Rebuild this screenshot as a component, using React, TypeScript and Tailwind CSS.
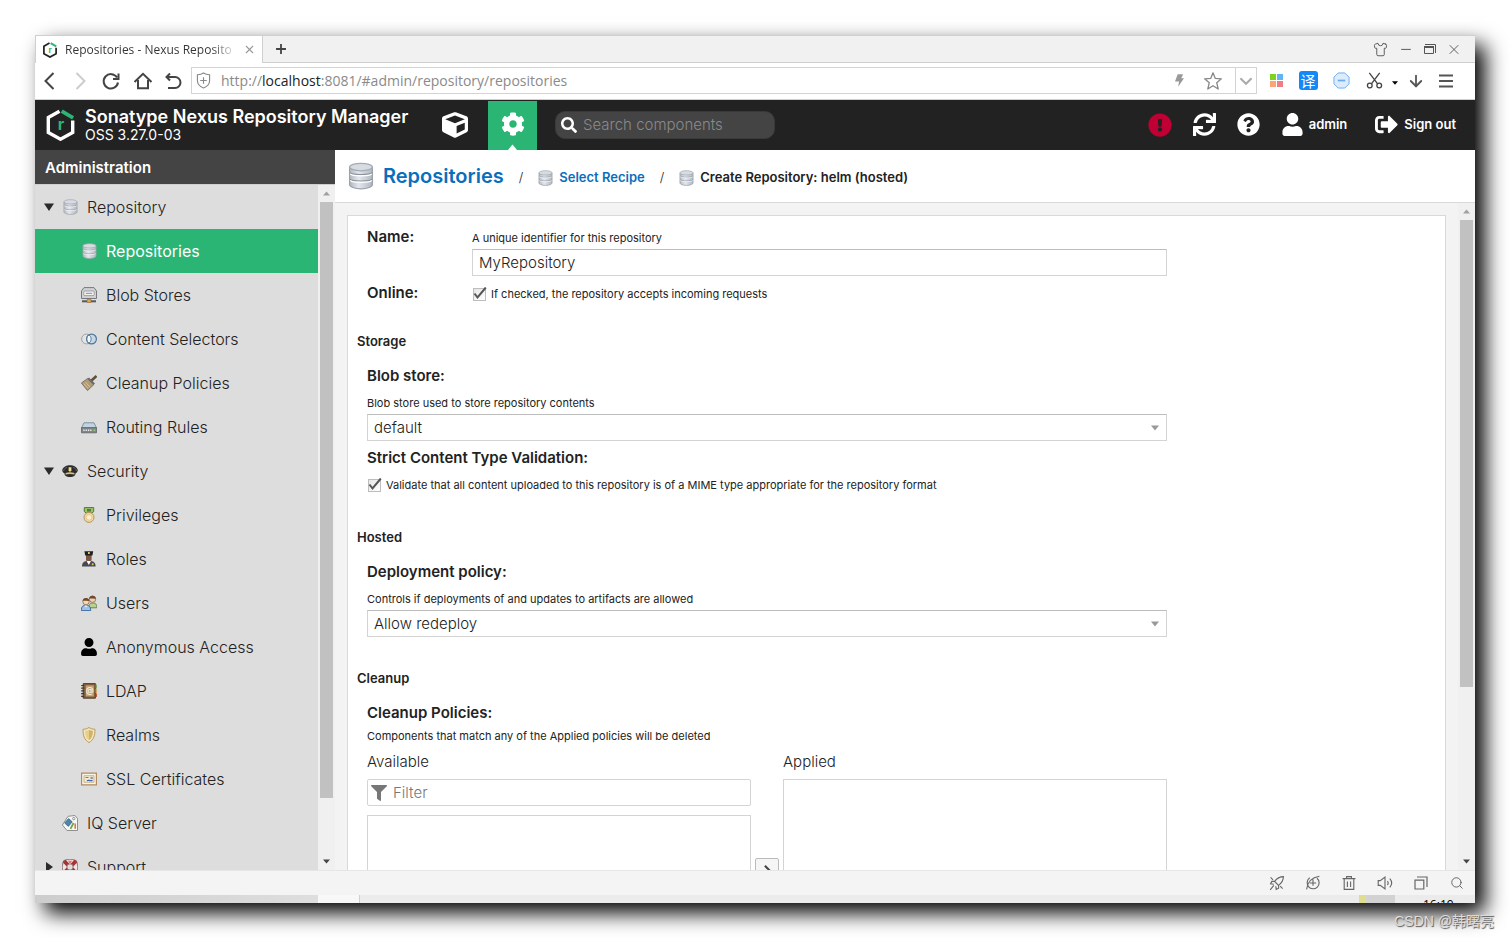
import { useState, type ReactNode } from 'react'
import {
  FaCog, FaCube, FaExclamationCircle, FaFilter, FaQuestionCircle, FaSearch, FaSignOutAlt, FaSync, FaUser,
} from 'react-icons/fa'
import { ArrowDown, Search, Shirt, X } from 'lucide-react'

/* ---------- icons ---------- */

const NexusLogo = ({ className, ring }: { className: string; ring: string }) => (
  <svg viewBox="0 0 28 32" className={className} fill="none">
    <path d="M13 2.2 1.8 8.6v14.8L14 30.2l12.2-6.8V11.5" stroke={ring} strokeWidth="3.4" />
    <path d="M15.2 2.2 26.6 8.8" stroke="#2bb574" strokeWidth="3.8" />
    <text x="14.4" y="21" textAnchor="middle" fontSize="16" fontWeight="700" fontFamily="Inter, sans-serif" fill="#2bb574">r</text>
  </svg>
)

const Database = ({ className = 'h-4 w-4' }: { className?: string }) => (
  <svg viewBox="0 0 16 17" className={className}>
    <defs>
      <linearGradient id="disk" x1="0" x2="1">
        <stop offset="0" stopColor="#b3b8c0" />
        <stop offset=".4" stopColor="#e3e8ef" />
        <stop offset="1" stopColor="#b0b6c0" />
      </linearGradient>
    </defs>
    <path d="M1 3.2v10.6c0 1.3 3 2.6 7 2.6s7-1.3 7-2.6V3.2Z" fill="url(#disk)" stroke="#9da2aa" strokeWidth=".8" />
    <path d="M1.2 6.4c1 1.6 12.6 1.6 13.6 0M1.2 10.4c1 1.6 12.6 1.6 13.6 0" fill="none" stroke="#8d939c" strokeWidth=".7" />
    <path d="M1.4 7.2c1 1.6 12.2 1.6 13.2 0M1.4 11.2c1 1.6 12.2 1.6 13.2 0" fill="none" stroke="#fff" strokeWidth=".7" />
    <ellipse cx="8" cy="3" rx="7" ry="2.3" fill="#d7dce2" stroke="#a6abb3" strokeWidth=".8" />
  </svg>
)

const Pic = ({ children }: { children: ReactNode }) => (
  <svg viewBox="0 0 16 16" className="h-4 w-4" fill="none">{children}</svg>
)

const BlobStores = () => (
  <Pic>
    <path d="M3 .6h10L15.500 4v7.500H.5V4Z" fill="#d0d1d3" stroke="#77797d" />
    <rect x="2.800" y="4" width="10.400" height="4.600" rx="1" fill="#f3f3f3" stroke="#8f9194" strokeWidth=".8" />
    <path d="M4.800 6.300h6.400" stroke="#8b8d90" />
    <path d="M1 14.300h14" stroke="#55575a" strokeWidth="2" />
    <path d="M6 12.400h4v3.200H6Z" fill="#e0a757" stroke="#8d6a35" strokeWidth=".6" />
  </Pic>
)

const ContentSelectors = () => (
  <Pic>
    <circle cx="5.500" cy="8" r="4.900" fill="#e4e4e4" stroke="#9fa1a3" />
    <circle cx="10.500" cy="8" r="4.900" fill="#c6d9e8" stroke="#4f7599" strokeWidth="1.200" />
    <path d="M8 3.900a4.900 4.900 0 0 1 0 8.200 4.900 4.900 0 0 1 0-8.200Z" fill="#f5f8fb" stroke="#4f7599" strokeWidth=".9" />
  </Pic>
)

const Broom = () => (
  <Pic>
    <path d="m10 6 5.500-5" stroke="#5f4e3d" strokeWidth="2.600" />
    <path d="M6.800 3.400 13 9.400 6.500 15.600.4 8Z" fill="#b39a77" stroke="#75624a" strokeWidth=".8" />
    <path d="m2.600 8.600 4.600 5M4.600 7.200l4.400 5" stroke="#dac7a5" strokeWidth=".9" />
    <path d="m7.200 3.200 6 6" stroke="#6b6c6e" strokeWidth="2.200" />
  </Pic>
)

const Router = () => (
  <Pic>
    <path d="M3 3.800h10L15.500 9H.5Z" fill="#c0d5e0" stroke="#74899a" strokeWidth=".9" />
    <path d="M.5 8.600h15v5.200H.5Z" fill="#808589" stroke="#606467" strokeWidth=".8" />
    <path d="M2.300 11.300h9" stroke="#f2f2f2" strokeWidth="1.600" strokeDasharray="1.300 1" />
    <path d="M12.600 11.300h1.600" stroke="#8fd46a" strokeWidth="1.600" />
  </Pic>
)

const PoliceCap = () => (
  <Pic>
    <path d="M.2 7C1.300 3.600 5 2.200 8 2.200S14.700 3.600 15.800 7c0 2-1.300 3-2.400 3.500.3 2.200-2 3.600-5.400 3.600s-5.700-1.400-5.400-3.600C1.500 10 .2 9 .2 7Z" fill="#2b2b2d" />
    <path d="M3.600 10c2.600-1 6.200-1 8.800 0l.2 1.500c-3-.8-6.200-.8-9.200 0Z" fill="#d8c07b" />
    <path d="M6.600 4.200h2.800v3.300L8 9 6.600 7.500Z" fill="#f2dc8c" />
    <path d="M1.500 8c.6-2 1.900-3.200 3.500-3.900M14.500 8c-.6-2-1.900-3.200-3.500-3.900" stroke="#77787c" strokeWidth=".8" />
  </Pic>
)

const Medal = () => (
  <Pic>
    <path d="M3.300.600h9.400v4L10.700 6H5.300l-2-1.400Z" fill="#9bc46e" stroke="#4f7a35" />
    <path d="M6 2h4v2.600H6Z" fill="#4f8232" />
    <circle cx="8" cy="10.400" r="5" fill="#efd9a3" stroke="#bd9556" />
    <circle cx="8" cy="10.400" r="2.800" fill="#faf0d2" stroke="#dcc286" strokeWidth=".8" />
  </Pic>
)

const Officer = () => (
  <Pic>
    <path d="M5 4h5.600v4.400c0 1.400-1.200 2.400-2.800 2.400S5 9.800 5 8.400Z" fill="#7b5644" />
    <path d="M3.400.300h8.800l-.8 4.200H4.200Z" fill="#1f2023" />
    <path d="M7 1.100h1.800v1.800H7Z" fill="#e8c95c" />
    <path d="M1 15.600c0-3.600 1.500-4.900 4.600-5.500h4.400c3.100.6 4.600 1.900 4.600 5.500Z" fill="#47494e" />
    <path d="m5.600 10.100 2.200 4 2.200-4Z" fill="#fff" />
    <path d="M10.800 12.300h1.700v1.900h-1.700Z" fill="#e8c95c" />
  </Pic>
)

const People = () => (
  <Pic>
    <path d="M8 12.800c0-3.800 1-4.800 3.800-4.800s4 1 4 4.800Z" fill="#b7d193" stroke="#5f7d40" strokeWidth=".9" />
    <circle cx="11.500" cy="4.200" r="3.200" fill="#f3cfae" stroke="#8b6547" strokeWidth=".8" />
    <path d="M8.200 3.800C8.200-.200 14.800-.200 14.800 3.800c-2.200.2-4.400-.5-6.600 0Z" fill="#6d4a30" />
    <path d="M.4 15.600c0-4.200 1.400-5.300 4.500-5.300s4.800 1.100 4.800 5.300Z" fill="#9cc2e6" stroke="#32609a" strokeWidth=".9" />
    <path d="m3.400 10.600 1.600 2 1.600-2Z" fill="#fff" />
    <circle cx="5" cy="6.600" r="3.200" fill="#f7d7b8" stroke="#8b6547" strokeWidth=".8" />
    <path d="M1.700 6c0-4 6.600-4 6.600 0-2.200.2-4.400-.5-6.600 0Z" fill="#6d4a30" />
  </Pic>
)

const AddressBook = () => (
  <Pic>
    <path d="M2.200.6h12.200v14.600H2.200Z" fill="#84623f" stroke="#573d23" />
    <path d="M4.800 2.400h8v11H4.800Z" fill="#c3a67c" />
    <path d="M15.200 1.500v4" stroke="#72a558" strokeWidth="1.400" />
    <path d="M15.200 6v4" stroke="#d6a04a" strokeWidth="1.400" />
    <path d="M15.200 10.500v3.500" stroke="#b04a32" strokeWidth="1.400" />
    <path d="M.2 2.500h3M.2 5.200h3M.2 7.900h3M.2 10.600h3M.2 13.300h3" stroke="#403729" strokeWidth="1.200" />
    <text x="8.800" y="10.400" textAnchor="middle" fontSize="8" fontWeight="600" fontFamily="Inter, sans-serif" fill="#fff4dc">@</text>
  </Pic>
)

const Shield = () => (
  <Pic>
    <path d="M8 .5c1.700 1.200 3.600 1.700 5.900 1.700.4 6.200-1.400 10.600-5.900 13.400C3.500 12.800 1.700 8.400 2.100 2.200 4.400 2.200 6.300 1.700 8 .5Z" fill="#f5e6bd" stroke="#b89a60" />
    <path d="M8 2.800c1.200.8 2.400 1.100 3.900 1.200 0 4.200-1.200 7.200-3.900 9.300Z" fill="#cdb468" />
    <path d="M8 2.800c-1.200.8-2.400 1.100-3.900 1.200 0 4.200 1.200 7.200 3.900 9.300Z" fill="#e6d08b" />
  </Pic>
)

const Certificate = () => (
  <Pic>
    <path d="M.6 2.200h14.800v11.600H.6Z" fill="#fbf5e8" stroke="#b08c5e" strokeWidth="1.200" />
    <path d="M3 4.700h10v6.600H3Z" fill="#f3ead6" stroke="#bda67d" strokeWidth=".8" />
    <path d="M4.500 6.500h3" stroke="#8b7a58" />
    <path d="M9.500 5.900h2.300v2.100H9.500Z" fill="#8a959f" />
    <path d="M6 9.900c1.500-1.500 2.500.5 5.500-.5" stroke="#3f66a8" strokeWidth="1.300" />
  </Pic>
)

const IqServer = () => (
  <Pic>
    <path d="M6 1.300 13 .5l2.500 3v12H5L.4 10Z" fill="#f7f7f7" stroke="#8f8f8f" />
    <path d="m6.600 3.600 3.600 3.200-3.800 4.600L2.600 8Z" fill="#4d87a8" stroke="#2f5c75" strokeWidth=".7" />
    <path d="m8.500 13.800 3-5.800" stroke="#6fa146" strokeWidth="1.700" />
    <path d="M13.200 13.800V8.500" stroke="#cf7f42" strokeWidth="1.600" />
    <circle cx="11.800" cy="3.600" r="1.200" stroke="#8a8a8a" strokeWidth=".9" />
  </Pic>
)

const Lifebuoy = () => (
  <Pic>
    <rect x=".8" y=".8" width="14.400" height="14.400" rx="3.500" fill="#dadada" stroke="#7d6060" />
    <circle cx="8" cy="8" r="5.200" stroke="#efe6e6" strokeWidth="4" />
    <path d="M2.200 2.200 5.800 5.800M13.800 2.200l-3.600 3.600M2.200 13.800l3.600-3.600M13.800 13.800l-3.600-3.600" stroke="#a83232" strokeWidth="3.800" />
    <path d="M6 1.800h4L8.800 4H7.200Z" fill="#e07a72" />
    <circle cx="8" cy="8" r="3.200" fill="#ddd" stroke="#8c4b4b" strokeWidth=".8" />
  </Pic>
)

const Line = ({ d, className = 'h-5 w-5', width = 2 }: { d: string; className?: string; width?: number }) => (
  <svg viewBox="0 0 20 20" className={className} fill="none" stroke="currentColor" strokeWidth={width}>
    <path d={d} />
  </svg>
)

const Triangle = ({ d, className }: { d: string; className: string }) => (
  <svg viewBox="0 0 10 10" className={className} fill="currentColor">
    <path d={d} />
  </svg>
)

const UP = 'M0 8 5 2l5 6Z'
const DOWN = 'M0 2h10L5 8Z'
const RIGHT = 'M2 0l7 5-7 5Z'
const TREE_OPEN = 'M0 1.500h10L5 9Z'

/* ---------- browser chrome ---------- */

const IconButton = ({ label, className, children }: { label: string; className: string; children: ReactNode }) => (
  <button type="button" aria-label={label} className={`flex shrink-0 items-center justify-center ${className}`}>
    {children}
  </button>
)

const TabStrip = () => (
  <div className="flex h-7 shrink-0 border-t border-[#cfcfcf] bg-[#f1f1f1] font-['Open_Sans',sans-serif]">
    <div className="flex w-[228px] items-center border-r border-l border-[#cfcfcf] bg-white pl-[7px]">
      <NexusLogo className="h-4 w-[14px]" ring="#222" />
      <span className="ml-2 w-[172px] overflow-hidden bg-linear-to-r from-[#333] from-85% to-transparent bg-clip-text text-[12px] whitespace-nowrap text-transparent">
        Repositories - Nexus Reposito
      </span>
      <IconButton label="Close tab" className="ml-1 h-4 w-4 text-[#999]">
        <X size={13} strokeWidth={2} />
      </IconButton>
    </div>
    <div className="flex flex-1 items-center border-b border-[#cfcfcf]">
      <IconButton label="New tab" className="h-6 w-9 text-[#444]">
        <Line d="M10 4.500v11M4.500 10h11" className="h-[18px] w-[18px]" />
      </IconButton>
      <div className="mr-[13px] ml-auto flex items-center gap-2 text-[#555]">
        <IconButton label="Skin" className="h-4 w-5"><Shirt size={15} strokeWidth={1.500} /></IconButton>
        <IconButton label="Minimize" className="h-4 w-4"><Line d="M4 10.500h12" width={1.200} className="h-4 w-4" /></IconButton>
        <IconButton label="Restore" className="h-4 w-4">
          <svg viewBox="0 0 14 14" className="h-[14px] w-[14px]" fill="none" stroke="currentColor">
            <path d="M1.500 4.500h9v7h-9Z" />
            <path d="M1 5h10" strokeWidth="2" />
            <path d="M2 2.500h10.500v8.500" />
          </svg>
        </IconButton>
        <IconButton label="Close" className="h-4 w-4"><X size={17} strokeWidth={1.400} /></IconButton>
      </div>
    </div>
  </div>
)

const Toolbar = () => (
  <div className="flex h-[37px] shrink-0 items-center border-b border-[#cfcfcf] bg-white pr-[15px] pb-px text-[#444]">
    <IconButton label="Back" className="h-7 w-[30px]"><Line d="M13.500 2 5.500 10l8 8" /></IconButton>
    <IconButton label="Forward" className="h-7 w-[30px] text-[#ccc]"><Line d="M6.500 2l8 8-8 8" /></IconButton>
    <IconButton label="Reload" className="h-7 w-8"><Line d="M16 6.500A7.200 7.200 0 1 0 17 11.500M17.500 2.500v5.500H12" /></IconButton>
    <IconButton label="Home" className="h-7 w-8"><Line d="M1.500 11 10 2.800l8.500 8.200M5 9v8.200h10V9" /></IconButton>
    <IconButton label="Undo" className="h-7 w-7"><Line d="M7 2.500 3.500 6 7 9.500M3.500 6H12a5 5 0 0 1 0 11H5" /></IconButton>

    <div className="ml-1 flex h-[27px] min-w-0 flex-1 items-center border border-[#d4d4d4]">
      <svg viewBox="0 0 16 18" className="ml-1 h-[17px] w-[15px] shrink-0 text-[#888]" fill="none" stroke="currentColor" strokeWidth="1.200">
        <path d="M8 1c2 1.400 4.200 1.800 6.500 1.800V9c0 4-2.500 6.500-6.500 8-4-1.500-6.500-4-6.500-8V2.800C3.800 2.800 6 2.400 8 1Z" />
        <path d="M8 5.500v7M4.500 9h7" />
      </svg>
      <p className="ml-[10px] min-w-0 flex-1 truncate font-['Open_Sans',sans-serif] text-[14px] text-[#8a8a8a]">
        http://<span className="text-[#222]">localhost</span>:8081/#admin/repository/repositories
      </p>
      <IconButton label="Speed mode" className="h-6 w-6 text-[#999]">
        <svg viewBox="0 0 10 14" className="h-[13px] w-[9px]" fill="currentColor"><path d="M3 0h6L7 4.500h3L3.500 14l1-6H0Z" /></svg>
      </IconButton>
      <IconButton label="Bookmark" className="h-6 w-11 text-[#888]">
        <svg viewBox="0 0 20 20" className="h-5 w-5" fill="none" stroke="currentColor" strokeWidth="1.300" strokeLinejoin="round">
          <path d="M10 1.800l2.300 5.600 6.100.4-4.700 3.900 1.500 6.300L10 14.700 4.800 18l1.500-6.300L1.600 7.800l6.100-.4Z" />
        </svg>
      </IconButton>
      <IconButton label="History" className="h-full w-[21px] border-l border-[#d4d4d4] text-[#aaa]">
        <Line d="M3 6.500l7 7 7-7" className="h-4 w-4" width={2.400} />
      </IconButton>
    </div>

    <IconButton label="Apps" className="ml-[3px] h-7 w-8">
      <span className="grid grid-cols-2 gap-px">
        <i className="h-[6px] w-[6px] bg-[#7ed321]" />
        <i className="h-[6px] w-[6px] bg-[#62b5f5]" />
        <i className="h-[6px] w-[6px] bg-[#ffa274]" />
        <i className="h-[6px] w-[6px] bg-[#f07c86]" />
      </span>
    </IconButton>
    <IconButton label="Translate" className="h-7 w-8">
      <span className="flex h-[19px] w-[19px] items-center justify-center rounded-[3px] bg-[#1488f5] font-['Noto_Sans_CJK_SC',sans-serif] text-[15px] leading-none text-white">译</span>
    </IconButton>
    <IconButton label="Ad block" className="h-7 w-[34px]">
      <svg viewBox="0 0 18 18" className="h-[17px] w-[17px]" fill="#dcecfd" stroke="#6aaaf0">
        <path d="M5.500 1h7L17 5.500v7L12.500 17h-7L1 12.500v-7Z" />
        <path d="M5 9h8" strokeWidth="1.800" />
      </svg>
    </IconButton>
    <IconButton label="Screenshot" className="h-7 w-8">
      <svg viewBox="0 0 18 18" className="h-[17px] w-[17px]" fill="none" stroke="currentColor" strokeWidth="1.400">
        <path d="M3.500 1l8.800 11.500M14.500 1 5.700 12.500" />
        <circle cx="4" cy="14.300" r="2.500" />
        <circle cx="14" cy="14.300" r="2.500" />
      </svg>
    </IconButton>
    <IconButton label="Screenshot options" className="h-7 w-[10px] text-black"><Triangle d={DOWN} className="mt-1 h-[6px] w-[6px]" /></IconButton>
    <IconButton label="Downloads" className="h-7 w-8 text-[#555]"><ArrowDown size={18} strokeWidth={2.400} /></IconButton>
    <IconButton label="Menu" className="h-7 w-7 text-[#555]"><Line d="M3 4.500h14M3 10h14M3 15.500h14" /></IconButton>
  </div>
)

const StatusBar = () => (
  <div className="flex h-[25px] shrink-0 items-center justify-end gap-5 border-t border-[#e6e6e6] bg-[#f4f4f4] pr-[10px] text-[#666]">
    <IconButton label="Accelerate" className="h-4 w-4">
      <Line d="M18 2c-5 0-8 2-11 6l5 5c4-3 6-6 6-11ZM7 8H3.500L2 11l4 .5M12 13v3.500L9 18l-.5-4M6 13l-4.500 5.500M2 3l3 3M14 14l3 3" width={1.400} className="h-4 w-4" />
    </IconButton>
    <IconButton label="Compat mode" className="h-4 w-4">
      <Line d="M15 4a7.500 7.500 0 1 1-9-.5M2 18C3 9 8 3 18 1.500M10 5.500v8M6 10h8" width={1.400} className="h-4 w-4" />
    </IconButton>
    <IconButton label="Clear" className="h-4 w-4">
      <Line d="M2 4.500h16M7 4.500V2h6v2.500M4 4.500V18h12V4.500M8 8v7M12 8v7" width={1.400} className="h-4 w-4" />
    </IconButton>
    <IconButton label="Sound" className="h-4 w-4">
      <Line d="M1.500 7v6H4l6 4.500v-15L4 7ZM13 7.500c1.200 1.500 1.200 3.500 0 5M16 4.500c3 3.500 3 7.500 0 11" width={1.400} className="h-4 w-4" />
    </IconButton>
    <IconButton label="Windows" className="h-4 w-4">
      <Line d="M2.500 6.500h11v11h-11ZM5 2.500h12.500V15" width={1.500} className="h-4 w-4" />
    </IconButton>
    <IconButton label="Find" className="h-4 w-4"><Search size={14} strokeWidth={1.700} /></IconButton>
  </div>
)

// sliver of the desktop task bar below the browser
const TaskBar = () => (
  <div className="flex h-2 shrink-0 overflow-hidden bg-[#ebebeb]">
    <div className="w-[283px] bg-linear-to-r from-[#cdcdcd] to-[#dedede]" />
    <div className="w-[42px] border-r border-[#cfcfcf] bg-[#f8f8f8]" />
    <div className="ml-auto w-[7px] bg-[#e0de8e]" />
    <div className="w-[29px] bg-[#d2d2d2]" />
    <span className="w-20 pl-7 font-['Open_Sans',sans-serif] text-[12px] leading-5 text-black">16:19</span>
  </div>
)

const ScrollBar = ({ thumb }: { thumb: string }) => (
  <div className="flex w-[17px] shrink-0 flex-col items-center bg-[#f0f0f0]">
    <Triangle d={UP} className="my-[5px] h-[7px] w-[7px] shrink-0 text-[#a0a0a0]" />
    <div className={`w-[13px] bg-[#c1c1c1] ${thumb}`} />
    <Triangle d={DOWN} className="mt-auto mb-[5px] h-[7px] w-[7px] shrink-0 text-[#444]" />
  </div>
)

/* ---------- nexus ---------- */

const AppHeader = () => (
  <header className="flex h-[50px] shrink-0 items-center bg-[#222] pr-[19px] text-white">
    <NexusLogo className="ml-[11px] h-8 w-[29px]" ring="#fff" />
    <div className="ml-[10px] w-[344px]">
      <h1 className="text-[18px] leading-5 font-semibold whitespace-nowrap">Sonatype Nexus Repository Manager</h1>
      <p className="text-[14px] leading-4">OSS 3.27.0-03</p>
    </div>
    <button type="button" aria-label="Browse" className="flex h-full w-[59px] items-center pb-px pl-[13px]">
      <FaCube size={26} />
    </button>
    <button type="button" aria-label="Administration" className="relative mt-px flex h-[49px] w-[49px] shrink-0 items-center justify-center bg-[#2bb574] pb-[3px]">
      <FaCog size={24} />
      <Triangle d="M0 10 5 4l5 6Z" className="absolute bottom-0 left-5 h-[9px] w-[9px]" />
    </button>
    <label className="ml-[18px] flex h-7 w-[220px] items-center rounded-[10px] border border-[#3a3a3a] bg-[#444] pl-[5px]">
      <FaSearch size={16} />
      <input type="text" placeholder="Search components" aria-label="Search components" className="ml-[6px] w-44 bg-transparent text-[15px] font-light outline-none placeholder:text-[#8a8a8a]" />
    </label>
    <div className="ml-auto flex shrink-0 items-center gap-[21px] pb-px text-[13px] font-semibold">
      <button type="button" aria-label="System status" className="text-[#c00034]"><FaExclamationCircle size={24} /></button>
      <button type="button" aria-label="Refresh"><FaSync size={23} /></button>
      <button type="button" aria-label="Help"><FaQuestionCircle size={23} /></button>
      <button type="button" className="flex items-center gap-[5px]"><FaUser size={23} />admin</button>
      <button type="button" className="ml-[7px] flex items-center gap-[6px]"><FaSignOutAlt size={23} />Sign out</button>
    </div>
  </header>
)

const menu = [
  { name: 'Repository', icon: <Database className="h-4 w-[15px]" />, level: 0, open: true },
  { name: 'Repositories', icon: <Database className="h-4 w-[15px]" />, level: 1 },
  { name: 'Blob Stores', icon: <BlobStores />, level: 1 },
  { name: 'Content Selectors', icon: <ContentSelectors />, level: 1 },
  { name: 'Cleanup Policies', icon: <Broom />, level: 1 },
  { name: 'Routing Rules', icon: <Router />, level: 1 },
  { name: 'Security', icon: <PoliceCap />, level: 0, open: true },
  { name: 'Privileges', icon: <Medal />, level: 1 },
  { name: 'Roles', icon: <Officer />, level: 1 },
  { name: 'Users', icon: <People />, level: 1 },
  { name: 'Anonymous Access', icon: <FaUser size={18} className="text-black" />, level: 1 },
  { name: 'LDAP', icon: <AddressBook />, level: 1 },
  { name: 'Realms', icon: <Shield />, level: 1 },
  { name: 'SSL Certificates', icon: <Certificate />, level: 1 },
  { name: 'IQ Server', icon: <IqServer />, level: 0 },
  { name: 'Support', icon: <Lifebuoy />, level: 0, open: false },
]

const Sidebar = () => {
  const [active, setActive] = useState('Repositories')
  return (
    <aside className="flex w-[300px] shrink-0 flex-col">
      <h2 className="h-[35px] shrink-0 border-b border-[#cfcfcf] bg-[#444] pl-[10px] text-[15px] leading-[35px] font-semibold text-white">Administration</h2>
      <div className="flex min-h-0 flex-1">
        <nav className="flex-1 overflow-hidden bg-[#ddd]">
          <ul>
            {menu.map((item) => (
              <li key={item.name}>
                <a
                  href="#"
                  onClick={() => setActive(item.name)}
                  className={`flex h-11 items-center pb-px text-[16px] ${item.level ? 'pl-[45px]' : 'pl-2'} ${active === item.name ? 'bg-[#2bb574] text-white' : 'font-light text-[#222]'}`}
                >
                  {item.level === 0 && (
                    <span className="mr-[6px] flex w-3 justify-center text-[#2b2b2b]">
                      {item.open !== undefined && <Triangle d={item.open ? TREE_OPEN : RIGHT} className="h-[10px] w-[10px]" />}
                    </span>
                  )}
                  <span className="mr-2 flex w-[18px] shrink-0 justify-center">{item.icon}</span>
                  {item.name}
                </a>
              </li>
            ))}
          </ul>
        </nav>
        <ScrollBar thumb="h-[596px]" />
      </div>
    </aside>
  )
}

const Breadcrumb = () => (
  <div className="flex h-[53px] shrink-0 items-center border-b border-[#d9d9d9] bg-white pl-[13px] text-[13px] font-semibold text-[#222]">
    <Database className="h-[30px] w-[26px]" />
    <a href="#" className="ml-[9px] text-[20px] leading-6 font-semibold text-[#0a6ebd]">Repositories</a>
    <div className="flex items-center pt-[3px]">
      <span className="mx-[15px] font-light">/</span>
      <Database className="h-4 w-[15px]" />
      <a href="#" className="ml-[6px] text-[#0a6ebd]">Select Recipe</a>
      <span className="mx-[15px] font-light">/</span>
      <Database className="h-4 w-[15px]" />
      <span className="ml-[6px]">Create Repository: helm (hosted)</span>
    </div>
  </div>
)

const Helper = ({ children, className = '' }: { children: ReactNode; className?: string }) => (
  <p className={`text-[11px] leading-4 ${className}`}>{children}</p>
)

const Check = ({ id, children, className }: { id: string; children: ReactNode; className: string }) => (
  <label htmlFor={id} className={`flex h-5 items-center text-[11px] ${className}`}>
    <span className="relative mr-1 flex h-[15px] w-[15px] items-center justify-center">
      <input id={id} type="checkbox" defaultChecked className="peer h-[13px] w-[13px] appearance-none border border-[#bdbdbd] bg-linear-to-br from-[#e6e6e6] to-white" />
      <svg viewBox="0 0 15 15" className="pointer-events-none absolute inset-0 hidden peer-checked:block" fill="none" stroke="#555" strokeWidth="2">
        <path d="M2.500 6.500 5.500 10.500 13.800.5" />
      </svg>
    </span>
    {children}
  </label>
)

const Select = ({ id, options }: { id: string; options: string[] }) => (
  <div className="relative mt-[3px]">
    <select id={id} className="h-[27px] w-full appearance-none border border-[#d4d4d4] border-t-[#bdbdbd] bg-white px-[6px] pt-px text-[15px] font-light">
      {options.map((o) => <option key={o}>{o}</option>)}
    </select>
    <Triangle d={DOWN} className="pointer-events-none absolute top-[10px] right-2 h-2 w-2 text-[#999]" />
  </div>
)

const legend = 'text-[13px] leading-5 font-semibold'
const fieldLabel = 'block text-[15px] leading-5 font-semibold'

const RepositoryForm = () => (
  <form className="min-w-0 flex-1 overflow-hidden border border-b-0 border-[#d9d9d9] bg-white px-[9px] pt-[11px] text-[#222]">
    <div className="max-w-[810px] pl-[10px]">
      <div className="grid grid-cols-[105px_1fr]">
        <label htmlFor="name" className={fieldLabel}>Name:</label>
        <div>
          <Helper className="mt-[3px]">A unique identifier for this repository</Helper>
          <input id="name" type="text" defaultValue="MyRepository" className="mt-[3px] block h-[27px] w-full border border-[#d4d4d4] border-t-[#bdbdbd] px-[6px] text-[15px] font-light" />
        </div>
        <span className={`${fieldLabel} mt-[7px]`}>Online:</span>
        <Check id="online" className="mt-2">If checked, the repository accepts incoming requests</Check>
      </div>
    </div>

    <h3 className={`${legend} mt-[27px]`}>Storage</h3>
    <div className="max-w-[810px] pl-[10px]">
      <label htmlFor="blob" className={`${fieldLabel} mt-[15px]`}>Blob store:</label>
      <Helper className="mt-[9px]">Blob store used to store repository contents</Helper>
      <Select id="blob" options={['default']} />
      <span className={`${fieldLabel} mt-[7px]`}>Strict Content Type Validation:</span>
      <Check id="strict" className="mt-[7px]">
        Validate that all content uploaded to this repository is of a MIME type appropriate for the repository format
      </Check>
    </div>

    <h3 className={`${legend} mt-8`}>Hosted</h3>
    <div className="max-w-[810px] pl-[10px]">
      <label htmlFor="policy" className={`${fieldLabel} mt-[15px]`}>Deployment policy:</label>
      <Helper className="mt-[9px]">Controls if deployments of and updates to artifacts are allowed</Helper>
      <Select id="policy" options={['Allow redeploy', 'Disable redeploy', 'Read-only']} />
    </div>

    <h3 className={`${legend} mt-[31px]`}>Cleanup</h3>
    <div className="max-w-[810px] pl-[10px]">
      <span className={`${fieldLabel} mt-[15px]`}>Cleanup Policies:</span>
      <Helper className="mt-[5px]">Components that match any of the Applied policies will be deleted</Helper>
      <div className="mt-2 grid grid-cols-[1fr_32px_1fr] text-[15px] leading-5 font-light">
        <div>
          <label htmlFor="filter">Available</label>
          <div className="mt-[7px] flex h-[27px] items-center rounded-[2px] border border-[#d4d4d4] pl-[3px] text-[#777]">
            <FaFilter size={16} />
            <input id="filter" type="text" placeholder="Filter" className="ml-[6px] min-w-0 flex-1 outline-none placeholder:text-[#777]" />
          </div>
          <div className="mt-[9px] h-40 border border-[#d4d4d4]" />
        </div>
        <div className="flex justify-center pt-[106px]">
          <button type="button" aria-label="Add" className="flex h-6 w-6 items-center justify-center rounded-[2px] border border-[#bbb] bg-[#f5f5f5] text-[#444]">
            <Line d="M7 4l6 6-6 6" className="h-[14px] w-[14px]" width={3} />
          </button>
        </div>
        <div>
          <span>Applied</span>
          <div className="mt-[7px] h-[196px] border border-[#d4d4d4]" />
        </div>
      </div>
    </div>
  </form>
)

const App = () => {
  return (
    <div className="relative h-screen overflow-hidden bg-white p-[35px] font-[Inter,sans-serif]">
      <div className="flex h-full flex-col overflow-hidden bg-white shadow-[10px_10px_20px_#000]">
        <TabStrip />
        <Toolbar />
        <AppHeader />
        <div className="flex min-h-0 flex-1">
          <Sidebar />
          <main className="flex min-w-0 flex-1 flex-col">
            <Breadcrumb />
            <div className="flex min-h-0 flex-1 bg-[#f3f3f3]">
              <div className="flex min-w-0 flex-1 px-3 pt-3">
                <RepositoryForm />
              </div>
              <ScrollBar thumb="h-[467px]" />
            </div>
          </main>
        </div>
        <StatusBar />
        <TaskBar />
      </div>
      <p className="absolute right-4 bottom-[7px] font-['Liberation_Sans','Noto_Sans_CJK_SC',sans-serif] text-[14px] leading-5 text-[#ddd] [text-shadow:1px_1px_1px_#555]">CSDN @韩曙亮</p>
    </div>
  )
}

export default App
